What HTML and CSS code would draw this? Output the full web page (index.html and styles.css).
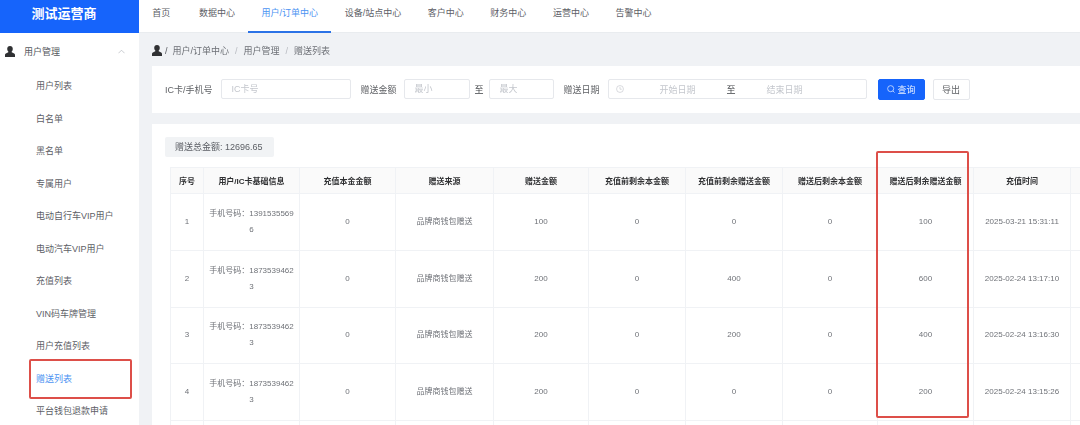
FILE: index.html
```html
<!DOCTYPE html>
<html lang="zh-CN">
<head>
<meta charset="utf-8">
<title>赠送列表</title>
<link rel="stylesheet" href="styles.css">
</head>
<body>
<div class="app">
  <header class="topbar">
    <div class="logo">测试运营商</div>
    <nav class="topnav">
      <a class="topnav-item home">首页</a>
      <a class="topnav-item">数据中心</a>
      <a class="topnav-item is-active">用户/订单中心</a>
      <a class="topnav-item">设备/站点中心</a>
      <a class="topnav-item">客户中心</a>
      <a class="topnav-item">财务中心</a>
      <a class="topnav-item">运营中心</a>
      <a class="topnav-item">告警中心</a>
    </nav>
  </header>
  <div class="layout">
    <aside class="sidebar">
      <div class="menu-title">
        <svg class="user-icon" viewBox="0 0 10 11"><path d="M5 0C3.200 0 2.200 1.300 2.200 3c0 1.100.4 2 1.100 2.600v.7L.9 7.500C.3 7.800 0 8.300 0 9v2h10V9c0-.7-.3-1.200-.9-1.500L6.700 6.300v-.7C7.400 5 7.800 4.100 7.800 3 7.800 1.300 6.800 0 5 0z"/></svg>
        <span class="menu-title-text">用户管理</span>
        <svg class="chevron" viewBox="0 0 8 5"><path d="M.5 4.500L4 1l3.500 3.500"/></svg>
      </div>
      <a class="menu-item">用户列表</a>
      <a class="menu-item">白名单</a>
      <a class="menu-item">黑名单</a>
      <a class="menu-item">专属用户</a>
      <a class="menu-item">电动自行车VIP用户</a>
      <a class="menu-item">电动汽车VIP用户</a>
      <a class="menu-item">充值列表</a>
      <a class="menu-item">VIN码车牌管理</a>
      <a class="menu-item">用户充值列表</a>
      <a class="menu-item is-active">赠送列表</a>
      <a class="menu-item">平台钱包退款申请</a>
    </aside>
    <main class="main">
      <div class="breadcrumb">
        <svg class="user-icon crumb-icon" viewBox="0 0 10 11"><path d="M5 0C3.200 0 2.200 1.300 2.200 3c0 1.100.4 2 1.100 2.600v.7L.9 7.500C.3 7.800 0 8.300 0 9v2h10V9c0-.7-.3-1.200-.9-1.500L6.700 6.300v-.7C7.400 5 7.800 4.100 7.800 3 7.800 1.300 6.800 0 5 0z"/></svg>
        <span class="crumb-sep first">/</span>
        <span>用户/订单中心</span>
        <span class="crumb-sep">/</span>
        <span>用户管理</span>
        <span class="crumb-sep">/</span>
        <span>赠送列表</span>
      </div>
      <section class="filters">
        <label class="f-label">IC卡/手机号</label>
        <input class="f-input w-card" placeholder="IC卡号">
        <label class="f-label gap-l">赠送金额</label>
        <input class="f-input w-min" placeholder="最小">
        <span class="f-to">至</span>
        <input class="f-input w-max" placeholder="最大">
        <label class="f-label gap-l">赠送日期</label>
        <div class="date-range">
          <svg class="clock" viewBox="0 0 10 10"><circle cx="5" cy="5" r="4.300"/><path d="M5 2.400V5.300H7.200"/></svg>
          <span class="date-ph start">开始日期</span>
          <span class="f-to date-sep">至</span>
          <span class="date-ph end">结束日期</span>
        </div>
        <button class="btn btn-primary">
          <svg class="search" viewBox="0 0 10 10"><circle cx="4.600" cy="4.600" r="3.800"/><path d="M7.400 7.400L9.400 9.400"/></svg>
          <span>查询</span>
        </button>
        <button class="btn btn-plain">导出</button>
      </section>
      <section class="card">
        <div class="total-tag">赠送总金额: 12696.65</div>
        <table class="grid">
          <colgroup>
            <col class="c-a"><col class="c-b"><col class="c-b"><col class="c-c"><col class="c-d"><col class="c-e"><col class="c-e"><col class="c-d"><col class="c-b"><col class="c-e"><col class="c-f">
          </colgroup>
          <thead>
            <tr><th>序号</th><th>用户/IC卡基础信息</th><th>充值本金金额</th><th>赠送来源</th><th>赠送金额</th><th>充值前剩余本金额</th><th>充值前剩余赠送金额</th><th>赠送后剩余本金额</th><th>赠送后剩余赠送金额</th><th>充值时间</th><th></th></tr>
          </thead>
          <tbody>
            <tr><td>1</td><td class="phone">手机号码：13915355696</td><td>0</td><td>品牌商钱包赠送</td><td>100</td><td>0</td><td>0</td><td>0</td><td>100</td><td>2025-03-21 15:31:11</td><td></td></tr>
            <tr><td>2</td><td class="phone">手机号码：18735394623</td><td>0</td><td>品牌商钱包赠送</td><td>200</td><td>0</td><td>400</td><td>0</td><td>600</td><td>2025-02-24 13:17:10</td><td></td></tr>
            <tr><td>3</td><td class="phone">手机号码：18735394623</td><td>0</td><td>品牌商钱包赠送</td><td>200</td><td>0</td><td>200</td><td>0</td><td>400</td><td>2025-02-24 13:16:30</td><td></td></tr>
            <tr><td>4</td><td class="phone">手机号码：18735394623</td><td>0</td><td>品牌商钱包赠送</td><td>200</td><td>0</td><td>0</td><td>0</td><td>200</td><td>2025-02-24 13:15:26</td><td></td></tr>
            <tr><td></td><td></td><td></td><td></td><td></td><td></td><td></td><td></td><td></td><td></td><td></td></tr>
          </tbody>
        </table>
      </section>
    </main>
  </div>
  <div class="mark mark-menu"></div>
  <div class="mark mark-col"></div>
</div>
</body>
</html>
```
FILE: styles.css
```css
* { box-sizing: border-box; }
html, body { margin: 0; padding: 0; height: 100%; overflow: hidden; background: #f0f2f5; }
body { font-family: "Liberation Sans", "Noto Sans CJK SC", sans-serif; font-size: 9px; color: #606266; }
.app { position: relative; width: 1080px; height: 425px; overflow: hidden; display: flex; flex-direction: column; filter: blur(0.45px); }

.topbar { display: flex; height: 33px; background: #fff; flex: none; border-bottom: 1px solid #e9ecef; }
.logo { width: 139px; height: 33px; flex: none; background: #1664fb; color: #fff; font-size: 13px; font-weight: 700; line-height: 28px; text-align: center; padding-right: 11px; }
.topnav { display: flex; height: 33px; }
.topnav-item { padding: 0 13.3px; line-height: 26px; color: #5d6066; white-space: nowrap; }
.topnav-item.home { margin-right: 2px; }
.topnav-item.is-active { color: #4c93f2; border-bottom: 2px solid #2b72e6; height: 33px; }

.layout { display: flex; flex: 1; min-height: 0; }
.sidebar { width: 139px; flex: none; background: #fff; overflow: hidden; }
.menu-title { height: 37px; display: flex; align-items: center; padding-left: 5px; color: #55585e; }
.user-icon { width: 10px; height: 11px; fill: #303133; flex: none; }
.menu-title-text { margin-left: 9px; flex: 1; }
.chevron { width: 7px; height: 5px; fill: none; stroke: #b4b8bf; stroke-width: .8; margin-right: 14px; }
.menu-item { display: block; height: 32.5px; line-height: 32.5px; padding-left: 36px; color: #5d6066; white-space: nowrap; }
.menu-item.is-active { color: #4c93f2; }

.main { flex: 1; min-width: 0; padding-left: 13px; display: flex; flex-direction: column; }
.breadcrumb { height: 33px; flex: none; display: flex; align-items: center; padding-top: 2px; color: #6c6f75; white-space: nowrap; }
.crumb-icon { margin-right: 3px; }
.crumb-sep { margin: 0 6px; color: #b8bbc1; }
.crumb-sep.first { margin: 0 5px 0 0; color: #55585e; }

.filters { height: 47px; flex: none; background: #fff; display: flex; align-items: center; padding: 0 0 1px 13px; margin-bottom: 11px; }
.f-label { color: #606266; white-space: nowrap; }
.gap-l { margin-left: 10px; }
.f-input { height: 20px; border: 1px solid #e6e8ec; border-radius: 2px; background: #fff; padding: 0 10px; font: inherit; color: #606266; outline: none; }
.f-input::placeholder { color: #c4c7cd; opacity: 1; }
.w-card { width: 130px; margin-left: 8px; }
.w-min { width: 66px; margin-left: 7px; }
.w-max { width: 65px; }
.f-to { width: 19px; text-align: center; color: #404347; flex: none; }
.date-range { width: 259px; height: 20px; margin-left: 8px; border: 1px solid #e6e8ec; border-radius: 2px; display: flex; align-items: center; padding-left: 7px; flex: none; }
.clock { width: 8px; height: 8px; fill: none; stroke: #c4c7cd; stroke-width: .8; flex: none; }
.date-ph { color: #c4c7cd; text-align: center; flex: none; }
.date-ph.start { width: 100px; margin-left: 4px; }
.date-ph.end { width: 98px; }
.date-sep { width: 9px; margin-left: -1px; }
.btn { height: 21px; border-radius: 2px; font: inherit; padding: 0; display: flex; align-items: center; justify-content: center; flex: none; }
.btn-primary { width: 47px; margin-left: 11px; background: #1664fb; border: 1px solid #1664fb; color: #e8f0ff; }
.search { width: 8px; height: 8px; fill: none; stroke: #e8f0ff; stroke-width: .9; margin-right: 3px; }
.btn-plain { width: 37px; margin-left: 8px; background: #fff; border: 1px solid #e6e8ec; color: #606266; }

.card { flex: 1; min-height: 0; background: #fff; padding: 13px 0 0 13px; overflow: hidden; }
.total-tag { width: 109px; height: 20px; background: #f1f3f5; border-radius: 2px; line-height: 20px; padding-left: 10px; color: #5d6066; white-space: nowrap; }
.grid { margin: 10px 0 0 5px; width: 1001px; table-layout: fixed; border-collapse: separate; border-spacing: 0; border-left: 1px solid #f0f2f5; border-top: 1px solid #f0f2f5; font-size: 8px; }
.c-a { width: 33px; }
.c-b { width: 96px; }
.c-c { width: 98px; }
.c-d { width: 95px; }
.c-e { width: 97px; }
.c-f { width: 100px; }
.grid th, .grid td { border-right: 1px solid #f0f2f5; border-bottom: 1px solid #f0f2f5; text-align: center; padding: 0 5px; }
.grid th { height: 26px; background: #fafafa; color: #303133; font-weight: 700; white-space: nowrap; padding: 0; }
.grid td { height: 56.75px; color: #6f7278; line-height: 16px; }
.grid .phone { word-break: break-all; }

.mark { position: absolute; border: 2px solid #dd4f49; border-radius: 2px; pointer-events: none; }
.mark-menu { left: 29px; top: 359px; width: 103px; height: 40px; }
.mark-col { left: 876px; top: 151px; width: 93px; height: 267px; }
```
